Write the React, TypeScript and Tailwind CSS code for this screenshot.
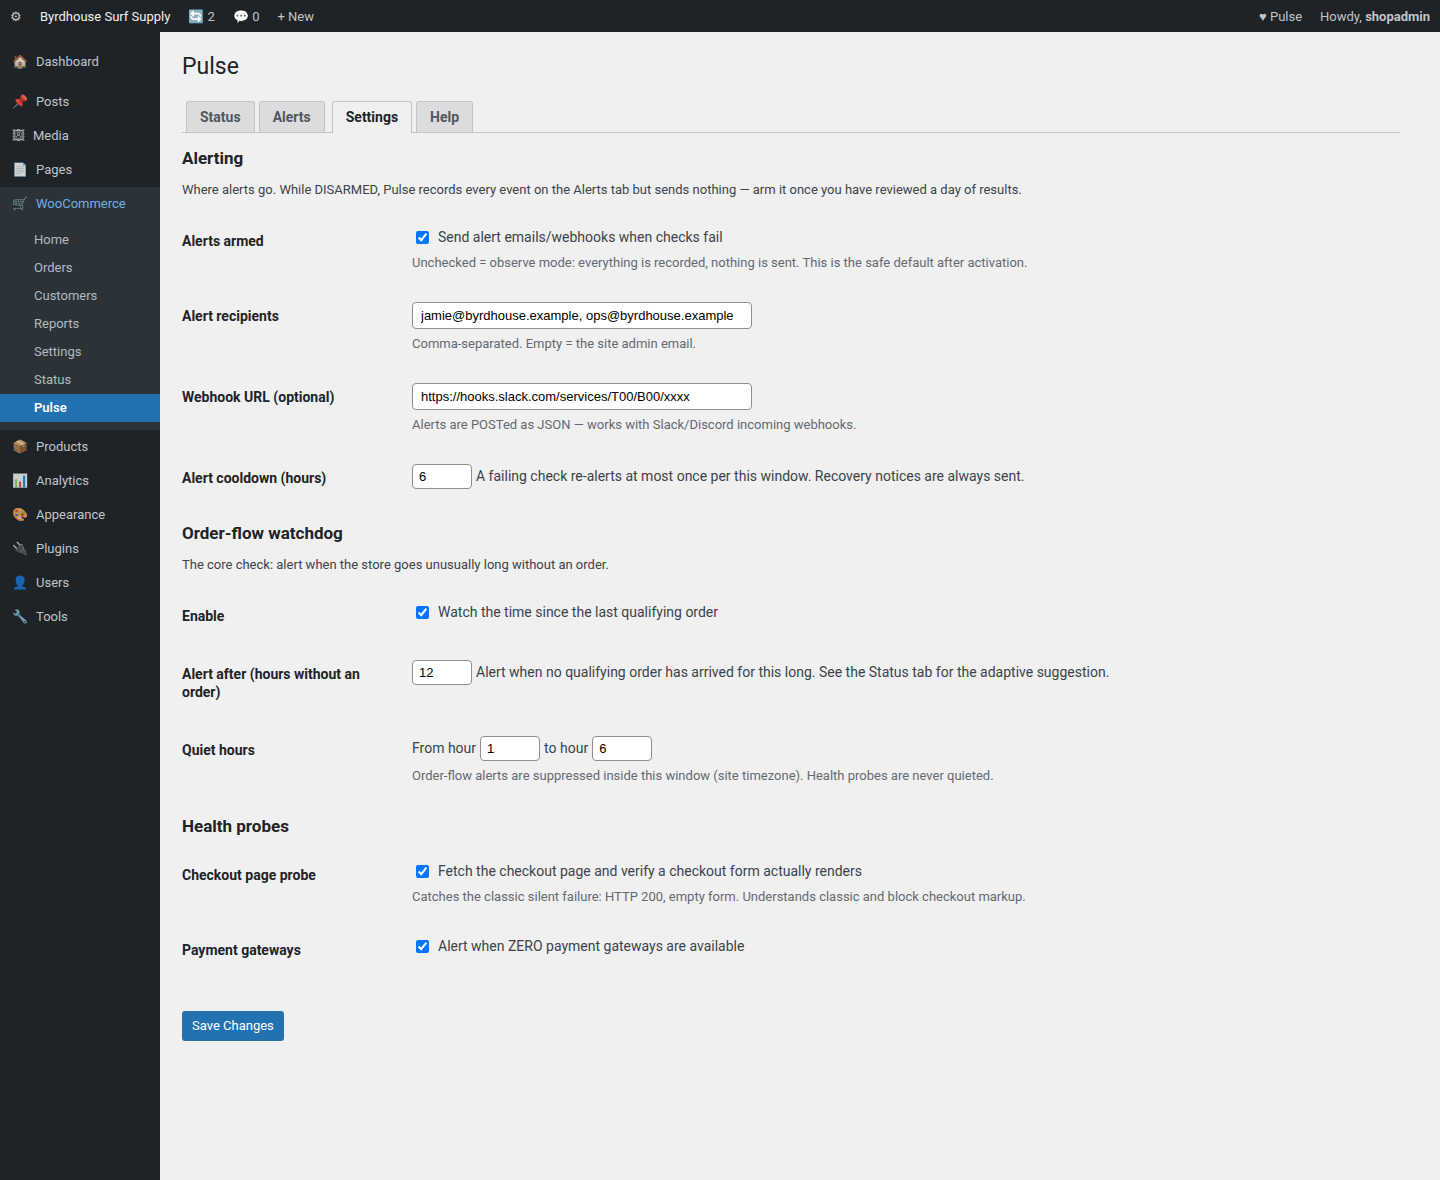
import { useState, type ReactNode } from "react";
import clsx from "clsx";

/* ===============================
   DATA
   =============================== */

interface MenuItem {
  icon: ReactNode;
  label: string;
  children?: string[];
}

// carved picture frame with a portrait inside
const FrameIcon = () => (
  <svg viewBox="0 0 13 12" className="inline-block h-3 w-[13px] align-[-1px]" fill="none" stroke="currentColor">
    <path d="M2 1.5h9M2 10.5h9M2 1v10M11 1v10" strokeWidth="1.3" />
    <path d="M.5 1h2M.5 11h2M10.5 1h2M10.5 11h2M.6 4.5h1M.6 7.5h1M11.4 4.5h1M11.4 7.5h1M5 .4h3M5 11.6h3" strokeWidth="1" />
    <circle cx="6.5" cy="4.8" r="1.2" strokeWidth="1" />
    <path d="M4.2 8.6c.3-1.6 1.2-2.2 2.3-2.2s2 .6 2.3 2.2" strokeWidth="1" />
    <path d="M3.6 3v6h5.8V3z" strokeWidth=".5" />
  </svg>
);

const MENU: MenuItem[] = [
  { icon: "📌", label: "Posts" },
  { icon: <FrameIcon />, label: "Media" },
  { icon: "📄", label: "Pages" },
  {
    icon: "🛒",
    label: "WooCommerce",
    children: [
      "Home",
      "Orders",
      "Customers",
      "Reports",
      "Settings",
      "Status",
      "Pulse",
    ],
  },
  { icon: "📦", label: "Products" },
  { icon: "📊", label: "Analytics" },
  { icon: "🎨", label: "Appearance" },
  { icon: "🔌", label: "Plugins" },
  { icon: "👤", label: "Users" },
  { icon: "🔧", label: "Tools" },
];

const TABS = ["Status", "Alerts", "Settings", "Help"];

/* ===============================
   SIDEBAR
   =============================== */

function MenuLink({ icon, label, open }: { icon: ReactNode; label: string; open?: boolean }) {
  return (
    <a
      href="#"
      className={clsx(
        "block px-3 py-2 leading-[18px]",
        open ? "text-[#72aee6]" : "text-[#c3c4c7]"
      )}
    >
      <span className="mr-2 opacity-80">{icon}</span>
      {label}
    </a>
  );
}

function Sidebar() {
  return (
    <nav aria-label="Main menu" className="w-40 shrink-0 bg-[#1d2327] pt-[13px] text-[13px]">
      <div className="mb-[6px]">
        <MenuLink icon="🏠" label="Dashboard" />
      </div>
      <ul>
        {MENU.map((item) => (
          <li key={item.label} className={clsx(item.children && "bg-[#2c3338]")}>
            <MenuLink icon={item.icon} label={item.label} open={!!item.children} />
            {item.children && (
              <ul className="pt-[5px] pb-2">
                {item.children.map((child) => (
                  <li key={child}>
                    <a
                      href="#"
                      className={clsx(
                        "block py-[5px] pl-[34px] leading-[18px]",
                        child === "Pulse"
                          ? "bg-[#2271b1] font-semibold text-white"
                          : "text-[#b4b9be]"
                      )}
                    >
                      {child}
                    </a>
                  </li>
                ))}
              </ul>
            )}
          </li>
        ))}
      </ul>
    </nav>
  );
}

/* ===============================
   FORM PARTS
   =============================== */

function Section({ title, intro, children }: { title: string; intro?: string; children: ReactNode }) {
  return (
    <section>
      <h2 className="mb-2 text-[17px] leading-6 font-bold text-[#1d2327]">{title}</h2>
      {intro && <p className="mb-[10px] text-[13px] leading-6">{intro}</p>}
      <table className="w-full">
        <tbody>{children}</tbody>
      </table>
    </section>
  );
}

function Row({ label, htmlFor, help, children }: { label: string; htmlFor: string; help?: string; children: ReactNode }) {
  return (
    <tr>
      <th scope="row" className="w-[230px] py-5 pr-[30px] text-left align-top text-[14px] leading-[18px] font-bold text-[#1d2327]">
        <label htmlFor={htmlFor} className="block">{label}</label>
      </th>
      <td className="py-[15px] align-top text-[14px] leading-[21px]">
        {children}
        {help && <p className="mt-[5px] text-[13px] leading-[19px] text-[#646970]">{help}</p>}
      </td>
    </tr>
  );
}

function Check({ id, text }: { id: string; text: string }) {
  return (
    <label className="flex items-center">
      <input id={id} type="checkbox" defaultChecked className="mr-[9px] ml-1 size-[13px]" />
      {text}
    </label>
  );
}

function TextField({ id, value }: { id: string; value: string }) {
  return (
    <input
      id={id}
      type="text"
      defaultValue={value}
      className="block h-[27px] w-[340px] rounded border border-[#8c8f94] bg-white px-2 font-['Liberation_Sans',sans-serif] text-[13px] text-black"
    />
  );
}

function NumberField({ id, value, label }: { id: string; value: number; label?: string }) {
  return (
    <input
      id={id}
      type="number"
      aria-label={label}
      defaultValue={value}
      className="h-[25px] w-[60px] rounded border border-[#8c8f94] bg-white px-[6px] font-['Liberation_Sans',sans-serif] text-[13px] text-black"
    />
  );
}

/* ===============================
   PAGE
   =============================== */

export default function App() {
  const [tab, setTab] = useState("Settings");

  return (
    <div className="flex min-h-screen flex-col bg-[#f0f0f1] font-[Roboto,sans-serif] text-[#3c434a]">
      <header className="flex h-8 items-center gap-[18px] bg-[#1d2327] px-[10px] pt-px text-[13px] text-[#c3c4c7]">
        <span>⚙</span>
        <a href="#" className="text-[#f0f0f1]">Byrdhouse Surf Supply</a>
        <a href="#">🔄 2</a>
        <a href="#">💬 0</a>
        <a href="#">+ New</a>
        <a href="#" className="ml-auto">♥ Pulse</a>
        <span>Howdy, <b className="font-bold">shopadmin</b></span>
      </header>

      <div className="flex flex-1">
        <Sidebar />

        <main className="min-w-0 flex-1 pt-[21px] pr-10 pb-10 pl-[22px]">
          <h1 className="text-[23px] leading-7 text-[#1d2327]">Pulse</h1>

          <div role="tablist" className="mt-5 flex items-end border-b border-[#c3c4c7] pl-1">
            {TABS.map((name) => (
              <button
                key={name}
                type="button"
                role="tab"
                aria-selected={tab === name}
                onClick={() => setTab(name)}
                className={clsx(
                  "rounded-t-[3px] border border-b-0 border-[#c3c4c7] px-[13px] text-[14px] leading-[30px] font-bold",
                  tab === name
                    ? "-mb-px ml-[3px] mr-1 bg-[#f0f0f1] pb-px text-[#1d2327]"
                    : "mr-1 bg-[#dcdcde] text-[#50575e]"
                )}
              >
                {name}
              </button>
            ))}
          </div>

          <form className="mt-[13px] space-y-[14px]" onSubmit={(e) => e.preventDefault()}>
            <Section
              title="Alerting"
              intro="Where alerts go. While DISARMED, Pulse records every event on the Alerts tab but sends nothing — arm it once you have reviewed a day of results."
            >
              <Row
                label="Alerts armed"
                htmlFor="armed"
                help="Unchecked = observe mode: everything is recorded, nothing is sent. This is the safe default after activation."
              >
                <Check id="armed" text="Send alert emails/webhooks when checks fail" />
              </Row>
              <Row label="Alert recipients" htmlFor="recipients" help="Comma-separated. Empty = the site admin email.">
                <TextField id="recipients" value="jamie@byrdhouse.example, ops@byrdhouse.example" />
              </Row>
              <Row
                label="Webhook URL (optional)"
                htmlFor="webhook"
                help="Alerts are POSTed as JSON — works with Slack/Discord incoming webhooks."
              >
                <TextField id="webhook" value="https://hooks.slack.com/services/T00/B00/xxxx" />
              </Row>
              <Row label="Alert cooldown (hours)" htmlFor="cooldown">
                <div className="flex items-center gap-1">
                  <NumberField id="cooldown" value={6} />
                  A failing check re-alerts at most once per this window. Recovery notices are always sent.
                </div>
              </Row>
            </Section>

            <Section
              title="Order-flow watchdog"
              intro="The core check: alert when the store goes unusually long without an order."
            >
              <Row label="Enable" htmlFor="watch">
                <Check id="watch" text="Watch the time since the last qualifying order" />
              </Row>
              <Row label="Alert after (hours without an order)" htmlFor="after">
                <div className="flex items-center gap-1">
                  <NumberField id="after" value={12} />
                  Alert when no qualifying order has arrived for this long. See the Status tab for the adaptive suggestion.
                </div>
              </Row>
              <Row
                label="Quiet hours"
                htmlFor="quiet-from"
                help="Order-flow alerts are suppressed inside this window (site timezone). Health probes are never quieted."
              >
                <div className="flex items-center gap-1">
                  From hour
                  <NumberField id="quiet-from" value={1} />
                  to hour
                  <NumberField id="quiet-to" value={6} label="Quiet until hour" />
                </div>
              </Row>
            </Section>

            <Section title="Health probes">
              <Row
                label="Checkout page probe"
                htmlFor="checkout"
                help="Catches the classic silent failure: HTTP 200, empty form. Understands classic and block checkout markup."
              >
                <Check id="checkout" text="Fetch the checkout page and verify a checkout form actually renders" />
              </Row>
              <Row label="Payment gateways" htmlFor="gateways">
                <Check id="gateways" text="Alert when ZERO payment gateways are available" />
              </Row>
            </Section>

            <button type="submit" className="mt-[18px] h-[30px] rounded-[3px] bg-[#2271b1] px-[10px] text-[13px] text-white">
              Save Changes
            </button>
          </form>
        </main>
      </div>
    </div>
  );
}
